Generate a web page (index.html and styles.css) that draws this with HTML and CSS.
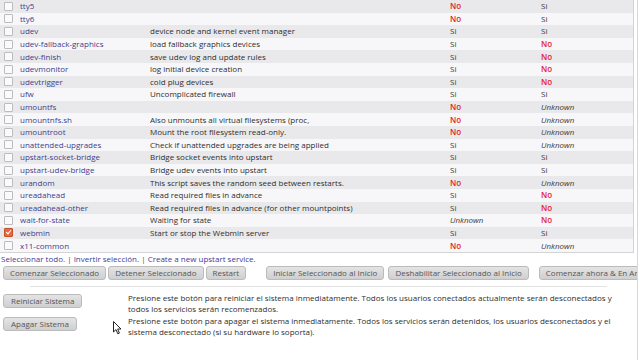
FILE: index.html
```html
<!DOCTYPE html>
<html lang="es">
<head>
    <meta charset="UTF-8">
    <meta name="viewport" content="width=device-width, initial-scale=1.0">
    <title>Acciones de Arranque y Apagado</title>
    <link rel="stylesheet" href="styles.css">
</head>
<body>
<div class="page">
    <form class="services">
        <div class="list">
            <table class="grid">
                <tr><td class="chk"><span class="box"></span></td><td class="name"><a href="#">tty5</a></td><td class="desc"></td><td><span class="no">No</span></td><td>Si</td></tr>
                <tr><td class="chk"><span class="box"></span></td><td class="name"><a href="#">tty6</a></td><td class="desc"></td><td><span class="no">No</span></td><td>Si</td></tr>
                <tr><td class="chk"><span class="box"></span></td><td class="name"><a href="#">udev</a></td><td class="desc">device node and kernel event manager</td><td>Si</td><td>Si</td></tr>
                <tr><td class="chk"><span class="box"></span></td><td class="name"><a href="#">udev-fallback-graphics</a></td><td class="desc">load fallback graphics devices</td><td>Si</td><td><span class="no">No</span></td></tr>
                <tr><td class="chk"><span class="box"></span></td><td class="name"><a href="#">udev-finish</a></td><td class="desc">save udev log and update rules</td><td>Si</td><td><span class="no">No</span></td></tr>
                <tr><td class="chk"><span class="box"></span></td><td class="name"><a href="#">udevmonitor</a></td><td class="desc">log initial device creation</td><td>Si</td><td><span class="no">No</span></td></tr>
                <tr><td class="chk"><span class="box"></span></td><td class="name"><a href="#">udevtrigger</a></td><td class="desc">cold plug devices</td><td>Si</td><td><span class="no">No</span></td></tr>
                <tr><td class="chk"><span class="box"></span></td><td class="name"><a href="#">ufw</a></td><td class="desc">Uncomplicated firewall</td><td>Si</td><td>Si</td></tr>
                <tr><td class="chk"><span class="box"></span></td><td class="name"><a href="#">umountfs</a></td><td class="desc"></td><td><span class="no">No</span></td><td><i>Unknown</i></td></tr>
                <tr><td class="chk"><span class="box"></span></td><td class="name"><a href="#">umountnfs.sh</a></td><td class="desc">Also unmounts all virtual filesystems (proc,</td><td><span class="no">No</span></td><td><i>Unknown</i></td></tr>
                <tr><td class="chk"><span class="box"></span></td><td class="name"><a href="#">umountroot</a></td><td class="desc">Mount the root filesystem read-only.</td><td><span class="no">No</span></td><td><i>Unknown</i></td></tr>
                <tr><td class="chk"><span class="box"></span></td><td class="name"><a href="#">unattended-upgrades</a></td><td class="desc">Check if unattended upgrades are being applied</td><td>Si</td><td><i>Unknown</i></td></tr>
                <tr><td class="chk"><span class="box"></span></td><td class="name"><a href="#">upstart-socket-bridge</a></td><td class="desc">Bridge socket events into upstart</td><td>Si</td><td>Si</td></tr>
                <tr><td class="chk"><span class="box"></span></td><td class="name"><a href="#">upstart-udev-bridge</a></td><td class="desc">Bridge udev events into upstart</td><td>Si</td><td>Si</td></tr>
                <tr><td class="chk"><span class="box"></span></td><td class="name"><a href="#">urandom</a></td><td class="desc">This script saves the random seed between restarts.</td><td><span class="no">No</span></td><td><i>Unknown</i></td></tr>
                <tr><td class="chk"><span class="box"></span></td><td class="name"><a href="#">ureadahead</a></td><td class="desc">Read required files in advance</td><td>Si</td><td><span class="no">No</span></td></tr>
                <tr><td class="chk"><span class="box"></span></td><td class="name"><a href="#">ureadahead-other</a></td><td class="desc">Read required files in advance (for other mountpoints)</td><td>Si</td><td><span class="no">No</span></td></tr>
                <tr><td class="chk"><span class="box"></span></td><td class="name"><a href="#">wait-for-state</a></td><td class="desc">Waiting for state</td><td><i>Unknown</i></td><td><span class="no">No</span></td></tr>
                <tr><td class="chk"><span class="box checked"></span></td><td class="name"><a href="#">webmin</a></td><td class="desc">Start or stop the Webmin server</td><td>Si</td><td>Si</td></tr>
                <tr><td class="chk"><span class="box"></span></td><td class="name"><a href="#">x11-common</a></td><td class="desc"></td><td><span class="no">No</span></td><td><i>Unknown</i></td></tr>
            </table>
        </div>
        <div class="links">
            <a href="#">Seleccionar todo.</a> | <a href="#">Invertir selección.</a> | <a href="#">Create a new upstart service.</a>
        </div>
        <div class="actions">
            <button type="button">Comenzar Seleccionado</button>
            <button type="button" class="tight">Detener Seleccionado</button>
            <button type="button" class="tight">Restart</button>
            <button type="button" class="wide">Iniciar Seleccionado al Inicio</button>
            <button type="button">Deshabilitar Seleccionado al Inicio</button>
            <button type="button" class="mid">Comenzar ahora &amp; En Arranque</button>
        </div>
    </form>

    <hr class="sep">

    <div class="system">
        <div class="sys-row">
            <div class="sys-btn"><button type="button">Reiniciar Sistema</button></div>
            <div class="sys-text">Presione este botón para reiniciar el sistema inmediatamente. Todos los usuarios conectados actualmente serán desconectados y todos los servicios serán recomenzados.</div>
        </div>
        <div class="sys-row">
            <div class="sys-btn"><button type="button">Apagar Sistema</button></div>
            <div class="sys-text">Presione este botón para apagar el sistema inmediatamente. Todos los servicios serán detenidos, los usuarios desconectados y el sistema desconectado (si su hardware lo soporta).</div>
        </div>
    </div>

    <svg class="cursor" width="9" height="14" viewBox="0 0 9 14">
        <path d="M0.5 0.5 L0.5 11 L3 8.6 L4.8 12.8 L6.4 12.1 L4.7 8 L8 8 Z" fill="#fff" stroke="#222" stroke-width="1"/>
    </svg>
</div>
</body>
</html>
```

FILE: styles.css
```css
html, body {
    margin: 0;
    padding: 0;
    background: #fff;
}
body {
    font-family: "Open Sans", "DejaVu Sans", sans-serif;
    font-size: 8px;
    color: #333;
    overflow: hidden;
}
.page {
    position: relative;
    width: 637px;
    height: 360px;
    border-right: 1px solid #d8d8d8;
}
.list {
    width: 633px;
    border-right: 1px solid #d4d4d4;
    border-bottom: 1px solid #d4d4d4;
}
.grid {
    width: 100%;
    border-collapse: collapse;
    table-layout: fixed;
}
.grid tr {
    height: 12.6px;
    background: #f7f7f9;
}
.grid tr:nth-child(odd) {
    background: #e9e9eb;
}
.grid td {
    padding: 0;
    line-height: 12px;
    white-space: nowrap;
    overflow: hidden;
    color: #3a3a3a;
}
.grid td.chk {
    width: 20px;
    padding-left: 4px;
    box-sizing: border-box;
}
.grid td.name {
    width: 130px;
}
.grid td.desc {
    width: 300px;
    color: #2e2e2e;
}
.grid td:nth-child(4) {
    width: 91px;
}
.grid a {
    color: #40408c;
    text-decoration: none;
}
.grid i {
    color: #3a3a3a;
}
.no {
    color: #e3202e;
    font-weight: 600;
}
.box {
    display: block;
    width: 7px;
    height: 7px;
    border: 1px solid #bcbcbc;
    border-radius: 1px;
    background: #fafafa;
}
.box.checked {
    background: #e8693e;
    border-color: #c9502a;
    position: relative;
}
.box.checked::after {
    content: "";
    position: absolute;
    left: 2px;
    top: 0;
    width: 2px;
    height: 4px;
    border: solid #fff;
    border-width: 0 1px 1px 0;
    transform: rotate(40deg);
}
.links {
    padding: 0 0 0 1px;
    line-height: 12px;
    color: #555;
}
.links a {
    color: #3c3c99;
    text-decoration: none;
}
.actions {
    display: flex;
    gap: 4px;
    padding: 1px 0 0 3px;
    white-space: nowrap;
    overflow: hidden;
}
.actions .tight {
    margin-left: -2px;
}
.actions .wide {
    margin-left: 16px;
}
.actions .mid {
    margin-left: 6px;
}
button {
    font-family: "Open Sans", "DejaVu Sans", sans-serif;
    font-size: 8px;
    color: #555;
    height: 14px;
    padding: 0 6px;
    border: 1px solid #bbb;
    border-radius: 3px;
    background: linear-gradient(#e4e4e4, #cfcfcf);
    line-height: 12px;
    flex-shrink: 0;
}
.sep {
    margin: 6px 30px 0 30px;
    border: none;
    border-top: 1px solid #e2e2e2;
    width: 577px;
}
.system {
    padding: 5px 0 0 3px;
}
.sys-row {
    display: flex;
}
.sys-btn {
    width: 125px;
    flex-shrink: 0;
}
.sys-row:first-child .sys-btn {
    padding-top: 2px;
}
.sys-row:last-child .sys-btn {
    padding-top: 2px;
}
.sys-btn button {
    padding: 0 7px;
}
.sys-text {
    width: 490px;
    line-height: 11.5px;
    color: #2e2e2e;
}
.cursor {
    position: absolute;
    left: 113px;
    top: 321px;
}
```
